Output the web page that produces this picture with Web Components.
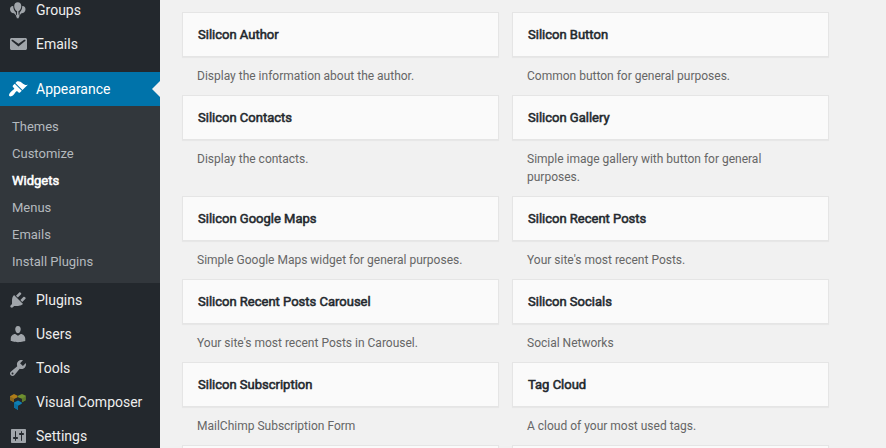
<!DOCTYPE html>
<html lang="en">
<head>
<meta charset="utf-8">
<title>Widgets</title>
<style>
html,body{margin:0;height:100%;overflow:hidden}
body{font-family:Roboto,"Liberation Sans",sans-serif;background:#f1f1f1}
</style>
</head>
<body>
<admin-shell>
  <admin-menu slot="menu">
    <menu-item icon="groups">Groups</menu-item>
    <menu-item icon="email">Emails</menu-item>
    <menu-gap></menu-gap>
    <menu-item icon="appearance" active>Appearance</menu-item>
    <sub-menu>
      <sub-item>Themes</sub-item>
      <sub-item>Customize</sub-item>
      <sub-item current>Widgets</sub-item>
      <sub-item>Menus</sub-item>
      <sub-item>Emails</sub-item>
      <sub-item>Install Plugins</sub-item>
    </sub-menu>
    <menu-item icon="plugins">Plugins</menu-item>
    <menu-item icon="users">Users</menu-item>
    <menu-item icon="tools">Tools</menu-item>
    <menu-item icon="composer">Visual Composer</menu-item>
    <menu-item icon="settings">Settings</menu-item>
  </admin-menu>
  <widget-list>
    <widget-card heading="Silicon Author">Display the information about the author.</widget-card>
    <widget-card heading="Silicon Button">Common button for general purposes.</widget-card>
    <widget-card heading="Silicon Contacts">Display the contacts.</widget-card>
    <widget-card heading="Silicon Gallery">Simple image gallery with button for general purposes.</widget-card>
    <widget-card heading="Silicon Google Maps">Simple Google Maps widget for general purposes.</widget-card>
    <widget-card heading="Silicon Recent Posts">Your site's most recent Posts.</widget-card>
    <widget-card heading="Silicon Recent Posts Carousel">Your site's most recent Posts in Carousel.</widget-card>
    <widget-card heading="Silicon Socials">Social Networks</widget-card>
    <widget-card heading="Silicon Subscription">MailChimp Subscription Form</widget-card>
    <widget-card heading="Tag Cloud">A cloud of your most used tags.</widget-card>
    <widget-card></widget-card>
    <widget-card></widget-card>
  </widget-list>
</admin-shell>
<script>
const ICONS = {
  groups: '<path d="M5.2 6C3.300 5.800 1.900 7.300 2 9.400c.1 2.100 1.800 3.600 4 3.900l2.100 2.300-.3-3.300C6.300 11 5.300 8.800 5.200 6zM14.300 6c1.900-.2 3.300 1.300 3.200 3.400-.1 2.100-1.800 3.600-4 3.900l-2.100 2.300.3-3.300c1.500-1.300 2.500-3.500 2.600-6.300z"/><path d="M9.750 2.200c2.200 0 3.550 1.700 3.550 3.900 0 2.300-1.300 4.500-2.900 5.200l.2 3.200 1.200 1.600c-.6.3-1 .9-1.100 2.200H8.800c-.1-1.300-.5-1.900-1.100-2.200l1.200-1.600.2-3.200c-1.600-.7-2.900-2.900-2.900-5.200 0-2.200 1.350-3.900 3.550-3.900z"/>',
  email: '<path d="M3.87 4h13.25C18.37 4 19 4.59 19 5.79v8.42c0 1.19-.63 1.79-1.88 1.79H3.87c-1.25 0-1.88-.6-1.88-1.79V5.79c0-1.2.63-1.79 1.88-1.79zm6.62 8.6l6.74-5.53c.24-.2.43-.66.13-1.07-.29-.41-.82-.42-1.17-.17l-5.7 3.86L4.8 5.83c-.35-.25-.88-.24-1.17.17-.3.41-.11.87.13 1.07z"/>',
  appearance: '<path d="M14.48 11.06L7.41 3.99l1.5-1.5c.5-.56 2.3-.47 3.51.32 1.21.8 1.43 1.28 2.91 2.1 1.18.64 2.45 1.26 4.45.85zm-.71.71L6.7 4.7 4.93 6.47c-.39.39-.39 1.02 0 1.41l1.06 1.06c.39.39.39 1.03 0 1.42-.6.6-1.43 1.11-2.21 1.69-.35.26-.7.53-1.01.84C1.43 14.23.4 16.08 1.4 17.07c.99 1 2.84-.03 4.18-1.36.31-.31.58-.66.85-1.02.57-.78 1.08-1.61 1.69-2.21.39-.39 1.02-.39 1.41 0l1.06 1.06c.39.39 1.02.39 1.41 0z"/>',
  plugins: '<path d="M13.11 4.36L9.87 7.6 8 5.73l3.24-3.24c.35-.34 1.05-.2 1.56.32.52.51.66 1.21.31 1.55zm-8 1.77l.91-1.12 9.01 9.01-1.19.84c-.71.71-2.63 1.16-3.82 1.16H6.14L4.9 17.26c-.59.59-1.54.59-2.12 0-.59-.58-.59-1.53 0-2.12l1.24-1.24v-3.88c0-1.13.4-3.19 1.09-3.89zm7.26 3.97l3.24-3.24c.34-.35 1.04-.21 1.55.31.52.51.66 1.21.31 1.55l-3.24 3.25z"/>',
  users: '<path d="M10 9.25c-2.27 0-2.73-3.44-2.73-3.44C7 4.02 7.82 2 9.97 2c2.16 0 2.98 2.02 2.71 3.81 0 0-.41 3.44-2.68 3.44zm0 2.57L12.72 10c2.39 0 4.52 2.33 4.52 4.53v2.49s-3.65 1.13-7.24 1.13c-3.65 0-7.24-1.13-7.24-1.13v-2.49c0-2.25 1.94-4.48 4.47-4.48z"/>',
  tools: '<path d="M16.68 9.77c-1.34 1.34-3.3 1.67-4.95.99l-5.41 6.52c-.99.99-2.59.99-3.58 0s-.99-2.59 0-3.57l6.52-5.42c-.68-1.65-.35-3.61.99-4.95 1.28-1.28 3.12-1.62 4.72-1.06l-2.89 2.89 2.82 2.82 2.86-2.87c.53 1.58.18 3.39-1.08 4.65zM3.81 16.21c.4.39 1.04.39 1.43 0 .4-.4.4-1.04 0-1.43-.39-.4-1.03-.4-1.43 0-.39.39-.39 1.03 0 1.43z"/>',
  composer: '<path fill="#ae7c19" d="M2 4.200L6 2l3.600 1.700v1.500L6 7v3.200L2 8z"/><path fill="#8c671d" d="M2 4.400L6 6.600v3.600L2 8z"/><path fill="#6f9030" d="M10 3.800L14 2l4 1.800-.4.900v3.500L14 10.200V6.800L10 5.200z"/><path fill="#5d7a2c" d="M14 6.600l3.600-2V8.200L14 10.200z"/><path fill="#0e7fb4" d="M6 10.600l4-2.200 3.800 2v1.400L10 13.700V18l-4-2.400z"/><path fill="#0c6f9f" d="M6 11l4 2.300V18l-4-2.400z"/>',
  settings: '<path d="M18 16V4c0-.55-.45-1-1-1H4c-.55 0-1 .45-1 1v12c0 .55.45 1 1 1h13c.55 0 1-.45 1-1zM8 11h1c.55 0 1 .45 1 1s-.45 1-1 1H8v1.500c0 .28-.22.5-.5.5s-.5-.22-.5-.5V13H6c-.55 0-1-.45-1-1s.45-1 1-1h1V5.500c0-.28.22-.5.5-.5s.5.22.5.5V11zm5-2h-1c-.55 0-1-.45-1-1s.45-1 1-1h1V5.500c0-.28.22-.5.5-.5s.5.22.5.5V7h1c.55 0 1 .45 1 1s-.45 1-1 1h-1v5.500c0 .28-.22.5-.5.5s-.5-.22-.5-.5V9z"/>'
};
const define = (name, html) => customElements.define(name, class extends HTMLElement {
  connectedCallback() {
    if (!this.shadowRoot) this.attachShadow({mode: 'open'}).innerHTML = typeof html === 'function' ? html(this) : html;
  }
});
define('admin-shell', `<style>:host{display:flex;height:100vh;overflow:hidden;background:#f1f1f1}</style><slot name="menu"></slot><slot></slot>`);
define('admin-menu', `<style>:host{display:flex;flex-direction:column;flex:0 0 160px;height:460px;margin-top:-7px;background:#23282d}</style><slot></slot>`);
define('menu-gap', `<style>:host{display:block;height:11px;flex:none}</style>`);
define('menu-item', el => `<style>
:host{display:flex;position:relative;flex:none;box-sizing:border-box;height:34px;padding-left:8px;gap:8px;align-items:center;font-size:14px;line-height:18px;color:#eee;fill:#a0a5aa}
:host([active]){background:#0073aa;color:#fff;fill:#fff}
:host([active])::after{content:"";position:absolute;right:0;top:9px;border:8px solid transparent;border-left:0;border-right-color:#f1f1f1}
svg{width:20px;height:20px;flex:none}
</style><svg viewBox="0 0 20 20">${ICONS[el.getAttribute('icon')]}</svg><span><slot></slot></span>`);
define('sub-menu', `<style>:host{display:block;flex:none;padding:7px 0 8px;background:#32373c}</style><slot></slot>`);
define('sub-item', `<style>:host{display:block;height:27px;padding-left:12px;font-size:13px;line-height:27px;color:#b4b9be}
:host([current]){color:#fff;-webkit-text-stroke:.55px #fff}</style><slot></slot>`);
define('widget-list', `<style>:host{display:grid;grid-template-columns:317px 317px;column-gap:13px;align-content:start;padding:12px 0 0 22px}</style><slot></slot>`);
define('widget-card', el => `<style>
:host{display:block}
h3{margin:0;box-sizing:border-box;height:45px;padding:15px;border:1px solid #e5e5e5;background:#fafafa;box-shadow:0 1px 1px rgba(0,0,0,.04);font-size:13px;font-weight:400;line-height:13px;color:#23282d;-webkit-text-stroke:.55px #23282d}
p{margin:0;padding:10px 15px;font-size:12px;line-height:18px;color:#666}
</style><h3>${el.getAttribute('heading') || ''}</h3><p><slot></slot></p>`);
</script>
</body>
</html>
